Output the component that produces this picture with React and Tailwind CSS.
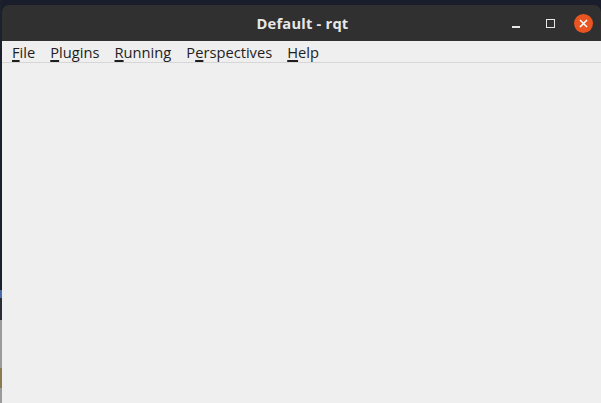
export default function App() {
  const menus = [
    ['', 'F', 'ile'],
    ['', 'P', 'lugins'],
    ['', 'R', 'unning'],
    ['P', 'e', 'rspectives'],
    ['', 'H', 'elp'],
  ];

  return (
    <div className="w-[601px] h-[403px] bg-[#1a1d2b] flex overflow-hidden" style={{ fontFamily: '"Open Sans", "Noto Sans", sans-serif' }}>
      {/* desktop strip behind window */}
      <div className="w-[2px] flex flex-col">
        <div className="h-[290px] bg-[#1c1f2c]" />
        <div className="h-[8px] bg-[#4a6aa8]" />
        <div className="h-[22px] bg-[#2a2d33]" />
        <div className="flex-1 bg-[#9a9a9a]" />
        <div className="h-[20px] bg-[#8a7a50]" />
        <div className="h-[15px] bg-[#9a9a9a]" />
      </div>

      {/* window */}
      <div className="flex-1 mt-[5px] rounded-t-[7px] overflow-hidden flex flex-col">
        {/* title bar */}
        <div className="h-[36px] bg-[#303030] flex items-center relative">
          <div className="flex-1 text-center text-[#e8e8e8] text-[14.7px] font-bold tracking-[0.2px] pl-[2px]">Default - rqt</div>
          <div className="absolute right-0 top-0 h-full flex items-center pr-[1px]">
            <div className="w-[34px] h-full flex items-center justify-center">
              <div className="w-[8px] h-[2px] bg-[#e6e6e6] mt-[8px]" />
            </div>
            <div className="w-[34px] h-full flex items-center justify-center">
              <div className="w-[9px] h-[9px] border-[1.5px] border-[#e6e6e6]" />
            </div>
            <div className="w-[33px] h-full flex items-center justify-center">
              <div className="w-[19px] h-[19px] rounded-full bg-[#e95420] flex items-center justify-center">
                <svg width="9" height="9" viewBox="0 0 9 9">
                  <path d="M1 1 L8 8 M8 1 L1 8" stroke="#ffffff" strokeWidth="1.6" />
                </svg>
              </div>
            </div>
          </div>
        </div>

        {/* menu bar */}
        <div className="h-[22px] bg-[#efefef] border-b border-[#d6d6d6] flex items-center pl-[10px] pt-[2px] text-[14.7px] text-[#1e1e1e] leading-none">
          {menus.map(([pre, key, rest]) => (
            <span key={key + rest} className="mr-[15px]">
              {pre}
              <span className="underline underline-offset-[2px] decoration-[1.5px]">{key}</span>
              {rest}
            </span>
          ))}
        </div>

        {/* content */}
        <div className="flex-1 bg-[#efefef]" />
      </div>
    </div>
  );
}
